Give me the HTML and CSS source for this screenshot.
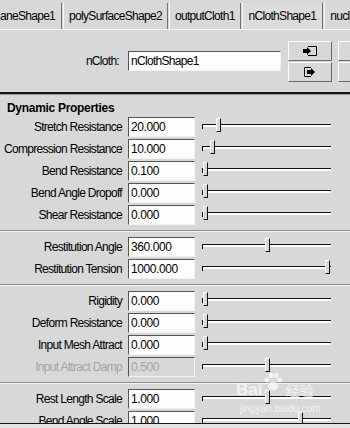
FILE: index.html
```html
<!DOCTYPE html>
<html>
<head>
<meta charset="utf-8">
<link rel="stylesheet" href="styles.css">
</head>
<body>
<div class="app">
  <div class="tabs">
    <div class="tab first">aneShape1</div>
    <div class="tab">polySurfaceShape2</div>
    <div class="tab">outputCloth1</div>
    <div class="tab active">nClothShape1</div>
    <div class="tab">nucleus1</div>
  </div>

  <div class="node">
    <span class="node-label">nCloth:</span>
    <div class="field node-field">nClothShape1</div>
    <div class="btn-col">
      <div class="btn">
        <svg width="16" height="12" viewBox="0 0 16 12"><path d="M6 1.5H14.5V10.5H6" fill="none" stroke="#000"/><path d="M1 4H5V2L9 6L5 10V8H1Z" fill="#000"/></svg>
      </div>
      <div class="btn">
        <svg width="16" height="12" viewBox="0 0 16 12"><path d="M9 1.5H2.5V10.5H9" fill="none" stroke="#000"/><path d="M5 4H9V2L13 6L9 10V8H5Z" fill="#000"/></svg>
      </div>
    </div>
    <div class="btn-col second">
      <div class="btn"></div>
      <div class="btn"></div>
    </div>
  </div>

  <div class="props">
    <div class="section-title">Dynamic Properties</div>
    <div class="group">
      <div class="row"><span class="label">Stretch Resistance</span><div class="field">20.000</div><div class="slider"><div class="track"></div><div class="thumb" style="left:14px"></div></div></div>
      <div class="row"><span class="label">Compression Resistance</span><div class="field">10.000</div><div class="slider"><div class="track"></div><div class="thumb" style="left:8px"></div></div></div>
      <div class="row"><span class="label">Bend Resistance</span><div class="field">0.100</div><div class="slider"><div class="track"></div><div class="thumb" style="left:1px"></div></div></div>
      <div class="row"><span class="label">Bend Angle Dropoff</span><div class="field">0.000</div><div class="slider"><div class="track"></div><div class="thumb" style="left:1px"></div></div></div>
      <div class="row"><span class="label">Shear Resistance</span><div class="field">0.000</div><div class="slider"><div class="track"></div><div class="thumb" style="left:1px"></div></div></div>
    </div>
    <div class="group sep">
      <div class="row"><span class="label">Restitution Angle</span><div class="field">360.000</div><div class="slider"><div class="track"></div><div class="thumb" style="left:63px"></div></div></div>
      <div class="row"><span class="label">Restitution Tension</span><div class="field">1000.000</div><div class="slider"><div class="track"></div><div class="thumb" style="left:123px"></div></div></div>
    </div>
    <div class="group sep">
      <div class="row"><span class="label">Rigidity</span><div class="field">0.000</div><div class="slider"><div class="track"></div><div class="thumb" style="left:1px"></div></div></div>
      <div class="row"><span class="label">Deform Resistance</span><div class="field">0.000</div><div class="slider"><div class="track"></div><div class="thumb" style="left:1px"></div></div></div>
      <div class="row"><span class="label">Input Mesh Attract</span><div class="field">0.000</div><div class="slider"><div class="track"></div><div class="thumb" style="left:1px"></div></div></div>
      <div class="row disabled"><span class="label">Input Attract Damp</span><div class="field">0.500</div><div class="slider"><div class="track"></div><div class="thumb" style="left:63px"></div></div></div>
    </div>
    <div class="group sep">
      <div class="row"><span class="label">Rest Length Scale</span><div class="field">1.000</div><div class="slider"><div class="track"></div><div class="thumb" style="left:63px"></div></div></div>
      <div class="row"><span class="label">Bend Angle Scale</span><div class="field">1.000</div><div class="slider"><div class="track"></div><div class="thumb" style="left:96px"></div></div></div>
    </div>
  </div>
  <div class="foot"></div>

  <div class="watermark">
    <div class="wm-top">
      <span class="wm-bai">Bai</span>
      <svg class="wm-paw" width="20" height="20" viewBox="0 0 20 20"><circle cx="4" cy="8" r="2.5"/><circle cx="8" cy="3.5" r="2.5"/><circle cx="13" cy="3.5" r="2.5"/><circle cx="16.5" cy="8" r="2.5"/><ellipse cx="10" cy="14" rx="5" ry="4.5"/></svg>
      <span class="wm-cn">经验</span>
    </div>
    <div class="wm-url">jingyan.baidu.com</div>
  </div>
</div>
</body>
</html>
```

FILE: styles.css
```css
* { box-sizing: border-box; }
html, body { margin: 0; padding: 0; }
body {
  width: 350px;
  height: 428px;
  overflow: hidden;
  background: #d8d8d8;
  font-family: "Liberation Sans", Arial, sans-serif;
  font-size: 12px;
  letter-spacing: -0.7px;
  color: #000;
}
.app {
  position: relative;
  width: 350px;
  height: 428px;
  overflow: hidden;
  display: flex;
  flex-direction: column;
}

/* tabs */
.tabs {
  flex: none;
  height: 30px;
  display: flex;
  padding-top: 3px;
  border-bottom: 1px solid #f6f6f6;
  overflow: hidden;
}
.tab {
  flex: none;
  display: flex;
  align-items: center;
  padding: 0 5px;
  margin-right: 1px;
  border-left: 1px solid #f6f6f6;
  border-right: 1px solid #707070;
  white-space: nowrap;
}
.tab.first { border-left: none; padding-left: 0; padding-right: 6px; }
.tab.active { background: #dcdcdc; padding: 0 6px; }

/* node row */
.node {
  flex: none;
  height: 64px;
  display: flex;
  align-items: center;
  overflow: hidden;
  border-bottom: 2px solid #161616;
}
.node > * { flex: none; }
.node-label { width: 119px; text-align: right; }
.node-field { width: 153px; margin-left: 9px; }
.btn-col {
  display: flex;
  flex-direction: column;
  gap: 1px;
  margin-left: 7px;
}
.btn-col.second { margin-left: 6px; }
.btn {
  width: 44px;
  height: 20px;
  display: flex;
  align-items: center;
  justify-content: center;
  border: 1px solid;
  border-color: #fbfbfb #6c6c6c #6c6c6c #fbfbfb;
}

/* fields */
.field {
  height: 20px;
  line-height: 18px;
  padding-left: 2px;
  background: #fdfdfd;
  border: 1px solid;
  border-color: #555 #f2f2f2 #f2f2f2 #555;
  white-space: nowrap;
  overflow: hidden;
}

/* properties */
.props {
  flex: 1;
  overflow: hidden;
  border-top: 1px solid #9c9c9c;
  border-bottom: 1px solid #161616;
}
.section-title {
  font-weight: bold;
  letter-spacing: -0.3px;
  padding: 5px 0 0 7px;
  height: 21px;
  line-height: 16px;
}
.group { padding-bottom: 4px; }
.group.sep {
  padding-top: 5px;
  border-top: 1px solid #8c8c8c;
  box-shadow: inset 0 1px 0 #f4f4f4;
}
.row {
  display: flex;
  align-items: center;
  height: 22px;
}
.row > * { flex: none; }
.label {
  width: 122px;
  text-align: right;
  white-space: nowrap;
}
.row .field { width: 67px; margin-left: 6px; letter-spacing: -0.4px; }
.slider {
  position: relative;
  align-self: stretch;
  width: 129px;
  margin-left: 7px;
  padding-top: 8px;
}
.track {
  position: relative;
  height: 3px;
  border-top: 1px solid #111;
  background: #fff;
}
.track::before {
  content: "";
  position: absolute;
  left: 0;
  top: -1px;
  width: 1px;
  height: 5px;
  background: #111;
}
.thumb {
  position: absolute;
  top: 2px;
  width: 5px;
  height: 14px;
  background: #d8d8d8;
  border: 1px solid;
  border-color: #fff #111 #111 #fff;
}
.row.disabled .label { color: #a4a4a4; }
.row.disabled .field { background: #d8d8d8; color: #a4a4a4; }

.foot { flex: none; height: 4px; background: #e4e4e4; }

/* watermark */
.watermark {
  position: absolute;
  left: 236px;
  top: 372px;
  width: 96px;
  letter-spacing: 0;
  color: rgba(255, 255, 255, 0.7);
  pointer-events: none;
}
.wm-top { display: flex; align-items: flex-end; height: 28px; }
.wm-bai { font-family: "Liberation Sans", sans-serif; font-weight: bold; font-size: 17px; line-height: 20px; }
.wm-paw { fill: rgba(255, 255, 255, 0.7); margin: 0 2px 2px 1px; align-self: flex-start; }
.wm-cn { font-family: "Noto Sans CJK SC", sans-serif; font-size: 14px; line-height: 20px; }
.wm-url { font-family: "Liberation Sans", sans-serif; font-size: 10px; margin-top: 3px; padding-left: 4px; }
```
